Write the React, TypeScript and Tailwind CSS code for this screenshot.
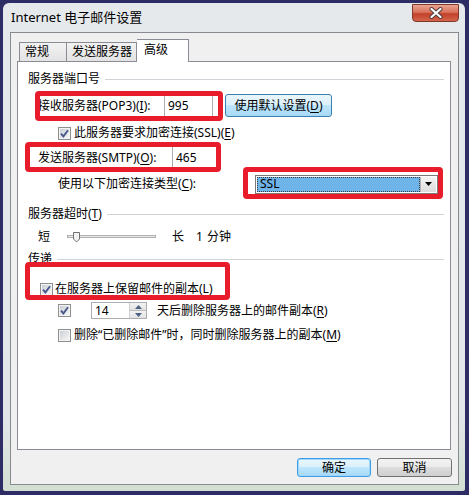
import React from 'react';

const font = { fontFamily: '"Noto Sans", "Noto Sans CJK SC", sans-serif' };

function Check({ checked = false }: { checked?: boolean }) {
  return (
    <span className="w-[13px] h-[13px] shrink-0 border border-[#8e8f8f] bg-[#f4f4f4] p-[1px] flex">
      <span className="flex-1 bg-[linear-gradient(135deg,#cbcfd5,#f6f6f6)] flex items-center justify-center">
        {checked && (
          <svg width="9" height="9" viewBox="0 0 9 9">
            <path d="M1 4.6 L3.4 7.4 L8 1.2" stroke="#4a5a8c" strokeWidth="1.9" fill="none" />
          </svg>
        )}
      </span>
    </span>
  );
}

function U({ c }: { c: string }) {
  return <span className="underline underline-offset-2">{c}</span>;
}

function GroupHeader({ children, mt }: { children: React.ReactNode; mt: string }) {
  return (
    <div className={`flex items-center h-[16px] ml-[10px] ${mt}`}>
      <span className="whitespace-nowrap">{children}</span>
      <div className="flex-1 h-px bg-[#d0d4d8] ml-[5px]" />
    </div>
  );
}

function TextBox({ value, w }: { value: string; w: string }) {
  return (
    <div className={`${w} h-full border border-[#abadb3] bg-white flex items-center pl-[3px]`}>{value}</div>
  );
}

function RedBox({ cls }: { cls: string }) {
  return <div className={`absolute border-[5px] border-[#e81c2a] rounded-[4px] pointer-events-none ${cls}`} />;
}

export default function App() {
  return (
    <div className="relative w-[469px] h-[495px] bg-[#2e2c64] pl-[3px] pt-[3px] text-[12px] text-black overflow-hidden" style={font}>
      <div className="w-[462px] h-[488px] rounded-t-[6px] rounded-b-[2px] bg-[linear-gradient(180deg,#e6e9ec_0%,#e2e6e9_85%,#d3dfd2_100%)] flex flex-col">
        {/* Title bar */}
        <div className="h-[29px] flex items-start">
          <span className="ml-[8px] mt-[5px] text-[13px] leading-[18px]">Internet 电子邮件设置</span>
          <div className="flex-1" />
          <div className="mt-[1px] mr-[6px] w-[47px] h-[18px] rounded-b-[4px] border border-[#7b3a2c] bg-[linear-gradient(180deg,#e9a28f_0%,#d8745c_45%,#c2402a_55%,#d4654b_100%)] flex items-center justify-center">
            <svg width="14" height="12" viewBox="0 0 14 12">
              <path d="M2.5 2 L11.5 10 M11.5 2 L2.5 10" stroke="#4a3a3a" strokeWidth="4" strokeLinecap="round" />
              <path d="M2.5 2 L11.5 10 M11.5 2 L2.5 10" stroke="#ffffff" strokeWidth="2.2" strokeLinecap="round" />
            </svg>
          </div>
        </div>

        {/* Client area */}
        <div className="ml-[7px] w-[449px] h-[453px] border border-[#878a8e] bg-[#f0f0f0] flex flex-col pl-[6px] pt-[6px]">
          {/* Tabs */}
          <div className="flex items-end h-[22px] ml-[2px]">
            <div className="w-[48px] h-[19px] border border-b-0 border-[#898c95] bg-[linear-gradient(180deg,#f2f2f2,#e3e3e3)] pl-[5px] leading-[18px]">常规</div>
            <div className="w-[70px] h-[19px] border border-b-0 border-l-0 border-[#898c95] bg-[linear-gradient(180deg,#f2f2f2,#e3e3e3)] pl-[5px] leading-[18px]">发送服务器</div>
            <div className="relative z-10 -mb-px w-[52px] h-[23px] border border-b-0 border-l-0 border-[#898c95] bg-white pl-[7px] leading-[20px]">高级</div>
          </div>

          {/* Panel */}
          <div className="w-[434px] h-[389px] border border-[#898c95] bg-white flex flex-col pr-[6px]">
            <GroupHeader mt="mt-[9px]">服务器端口号</GroupHeader>

            <div className="flex items-center h-[25px] mt-[6px] ml-[20px]">
              <span className="w-[126px] whitespace-nowrap">接收服务器(POP3)(<U c="I" />):</span>
              <TextBox value="995" w="w-[49px]" />
              <div className="ml-[12px] w-[107px] h-[23px] rounded-[3px] border border-[#3c7fb1] bg-[linear-gradient(180deg,#eaf6fd_0%,#d9f0fc_50%,#bee6fd_50%,#a7d9f5_100%)] flex items-center justify-center">
                使用默认设置(<U c="D" />)
              </div>
            </div>

            <div className="flex items-center h-[14px] mt-[8px] ml-[40px]">
              <Check checked />
              <span className="ml-[3px] whitespace-nowrap">此服务器要求加密连接(SSL)(<U c="E" />)</span>
            </div>

            <div className="flex items-center h-[25px] mt-[5px] ml-[20px]">
              <span className="w-[134px] whitespace-nowrap">发送服务器(SMTP)(<U c="O" />):</span>
              <TextBox value="465" w="w-[49px]" />
            </div>

            <div className="flex items-center h-[20px] mt-[4px] ml-[40px]">
              <span className="w-[197px] whitespace-nowrap">使用以下加密连接类型(<U c="C" />):</span>
              <div className="w-[183px] h-[19px] border border-[#7a7a7a] bg-white flex p-px">
                <div className="flex-1 bg-[#6fb4e8] border border-dotted border-[#3a3a3a] flex items-center pl-[2px] text-black">SSL</div>
                <div className="w-[16px] bg-[linear-gradient(180deg,#f4f4f4,#dcdcdc)] border-l border-[#b5b5b5] flex items-center justify-center">
                  <svg width="7" height="4" viewBox="0 0 7 4">
                    <path d="M0 0 H7 L3.5 4 Z" fill="#000" />
                  </svg>
                </div>
              </div>
            </div>

            <GroupHeader mt="mt-[12px]">
              服务器超时(<U c="T" />)
            </GroupHeader>

            <div className="flex items-center h-[16px] mt-[7px] ml-[20px]">
              <span className="w-[29px]">短</span>
              <svg width="90" height="14" viewBox="0 0 90 14">
                <rect x="0.5" y="5.5" width="88" height="2" fill="#e7eaea" stroke="#b0b0b0" />
                <path d="M6.5 2.5 H12.5 V9 L9.5 12 L6.5 9 Z" fill="#f2f2f2" stroke="#707070" />
              </svg>
              <span className="ml-[15px]">长</span>
              <span className="ml-[12px]">1</span>
              <span className="ml-[4px]">分钟</span>
            </div>

            <GroupHeader mt="mt-[6px]">传递</GroupHeader>

            <div className="flex items-center h-[14px] mt-[15px] ml-[22px]">
              <Check checked />
              <span className="ml-[2px] whitespace-nowrap">在服务器上保留邮件的副本(<U c="L" />)</span>
            </div>

            <div className="flex items-center h-[17px] mt-[6px] ml-[40px]">
              <Check checked />
              <div className="ml-[20px] w-[56px] h-full border border-[#abadb3] bg-white flex">
                <span className="flex-1 pl-[3px] leading-[15px]">14</span>
                <div className="w-[17px] flex flex-col border-l border-[#cfcfcf]">
                  <div className="flex-1 bg-[linear-gradient(180deg,#f3f3f3,#e2e2e2)] border-b border-[#bdbdbd] flex items-center justify-center">
                    <svg width="7" height="4" viewBox="0 0 7 4"><path d="M0 4 H7 L3.5 0 Z" fill="#4d6185" /></svg>
                  </div>
                  <div className="flex-1 bg-[linear-gradient(180deg,#f3f3f3,#e2e2e2)] flex items-center justify-center">
                    <svg width="7" height="4" viewBox="0 0 7 4"><path d="M0 0 H7 L3.5 4 Z" fill="#4d6185" /></svg>
                  </div>
                </div>
              </div>
              <span className="ml-[10px] whitespace-nowrap">天后删除服务器上的邮件副本(<U c="R" />)</span>
            </div>

            <div className="flex items-center h-[14px] mt-[9px] ml-[40px]">
              <Check />
              <span className="ml-[3px] whitespace-nowrap">删除“已删除邮件”时，同时删除服务器上的副本(<U c="M" />)</span>
            </div>
          </div>

          {/* Buttons */}
          <div className="flex justify-end gap-[6px] mt-[8px] mr-[6px]">
            <div className="w-[74px] h-[19px] rounded-[3px] border border-[#3c9ee8] bg-[linear-gradient(180deg,#eaf6fd_0%,#d9f0fc_50%,#bee6fd_50%,#a7d9f5_100%)] shadow-[0_0_0_1px_#9fd6fb_inset] flex items-center justify-center">
              确定
            </div>
            <div className="w-[75px] h-[19px] rounded-[3px] border border-[#707070] bg-[linear-gradient(180deg,#f2f2f2_0%,#ebebeb_50%,#dddddd_50%,#cfcfcf_100%)] flex items-center justify-center">
              取消
            </div>
          </div>
        </div>
      </div>

      {/* Annotation boxes */}
      <RedBox cls="left-[35px] top-[91px] w-[188px] h-[30px]" />
      <RedBox cls="left-[25px] top-[142px] w-[196px] h-[30px]" />
      <RedBox cls="left-[243px] top-[167px] w-[200px] h-[32px]" />
      <RedBox cls="left-[25px] top-[262px] w-[205px] h-[38px]" />
    </div>
  );
}
